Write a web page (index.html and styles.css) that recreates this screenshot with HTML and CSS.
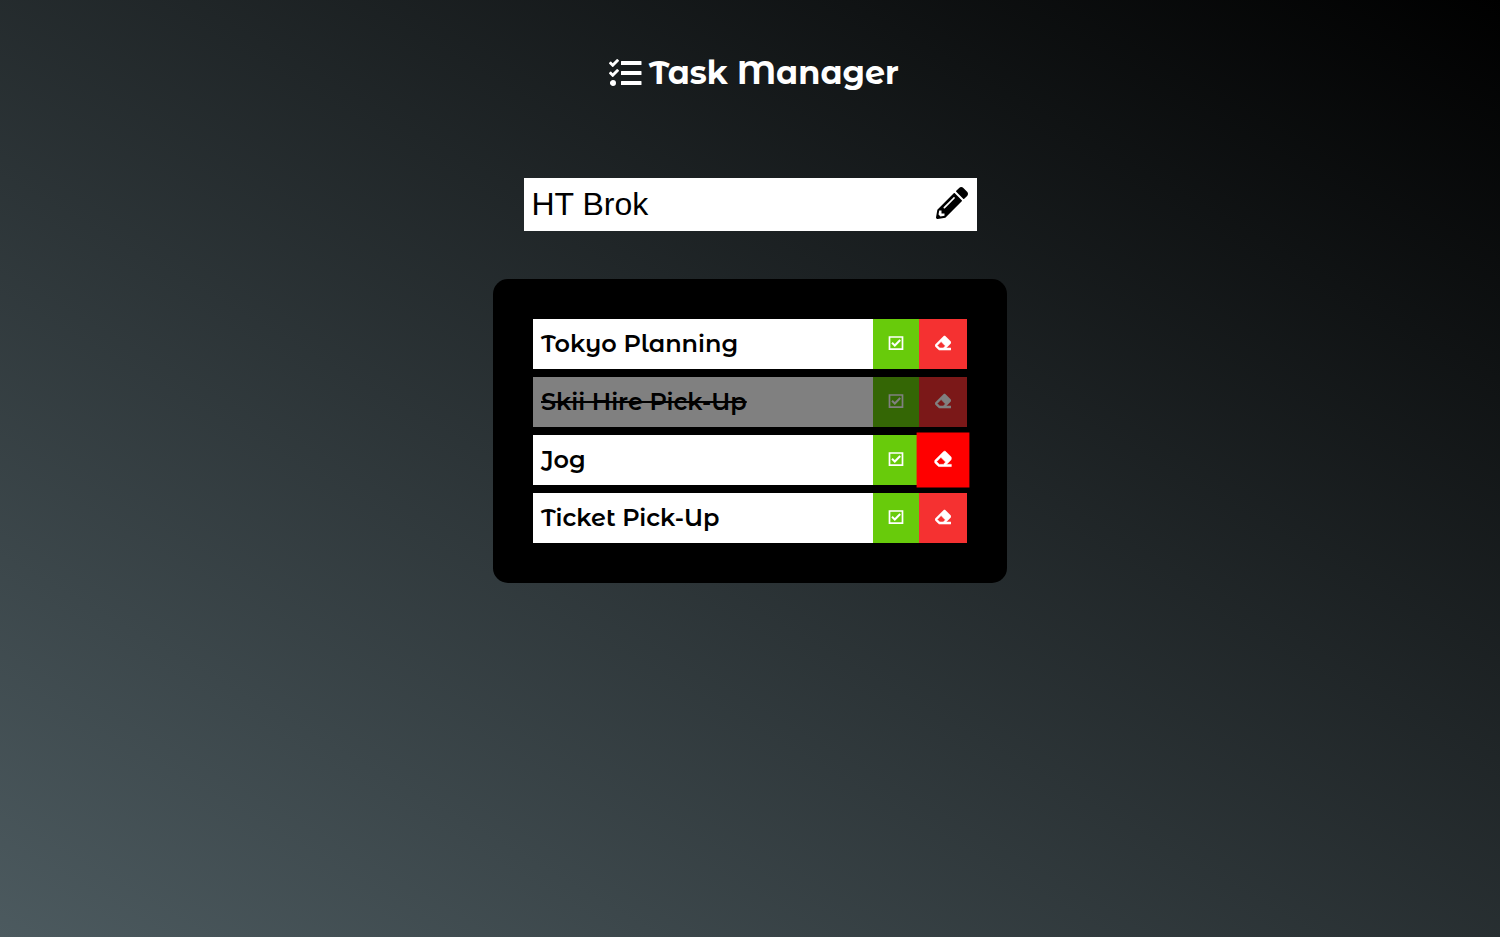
FILE: index.html
```
<!DOCTYPE html>
<html lang="en">
<head>
<meta charset="utf-8">
<title>Task Manager</title>
<link rel="stylesheet" href="styles.css">
</head>
<body>
<svg width="0" height="0" class="sprite" aria-hidden="true">
  <symbol id="check" viewBox="0 0 16 16"><path d="M1.500 2h13v12.200h-13z" fill="none" stroke="currentColor" stroke-width="1.700"/><path d="M4 7.800l2.800 2.700L12.200 5" fill="none" stroke="currentColor" stroke-width="2"/></symbol>
  <symbol id="eraser" viewBox="0 0 512 512"><path fill="currentColor" stroke="currentColor" stroke-width="18" d="M497.941 273.941c18.745-18.745 18.745-49.137 0-67.882l-160-160c-18.745-18.745-49.136-18.746-67.883 0l-256 256c-18.745 18.745-18.745 49.137 0 67.882l96 96A48.004 48.004 0 0 0 144 480h356c6.627 0 12-5.373 12-12v-40c0-6.627-5.373-12-12-12H355.883l142.058-142.059zm-302.627-62.627l137.373 137.373L265.373 416H150.628l-80-80 124.686-124.686z"/></symbol>
</svg>
<header>
  <h1>
    <svg class="list-icon" viewBox="0 0 512 512"><path fill="currentColor" d="M139.61 35.5a12 12 0 0 0-17 0L58.93 98.81l-22.7-22.12a12 12 0 0 0-17 0L3.53 92.41a12 12 0 0 0 0 17l47.59 47.4a12.78 12.78 0 0 0 17.61 0l15.59-15.62L156.52 69a12.09 12.09 0 0 0 .09-17zm0 159.19a12 12 0 0 0-17 0l-63.68 63.72-22.7-22.1a12 12 0 0 0-17 0L3.53 252a12 12 0 0 0 0 17L51 316.5a12.77 12.77 0 0 0 17.6 0l15.7-15.69 72.2-72.22a12 12 0 0 0 .09-16.9zM64 368c-26.49 0-48.59 21.5-48.59 48S37.53 464 64 464a48 48 0 0 0 0-96zm432 16H200a8 8 0 0 0-8 8v48a8 8 0 0 0 8 8h312a8 8 0 0 0 8-8v-48a8 8 0 0 0-8-8zm0-320H200a8 8 0 0 0-8 8v48a8 8 0 0 0 8 8h312a8 8 0 0 0 8-8V72a8 8 0 0 0-8-8zm0 160H200a8 8 0 0 0-8 8v48a8 8 0 0 0 8 8h312a8 8 0 0 0 8-8v-48a8 8 0 0 0-8-8z"/></svg>
    <span>Task Manager</span>
  </h1>
</header>
<form class="entry">
  <span class="value">HT Brok</span>
  <svg class="pencil" viewBox="0 0 512 512"><path d="M497.900 142.100l-46.100 46.100c-4.700 4.700-12.300 4.700-17 0l-111-111c-4.700-4.700-4.700-12.300 0-17l46.100-46.100c18.700-18.700 49.100-18.700 67.900 0l60.100 60.100c18.800 18.700 18.800 49.100 0 67.900zM284.200 99.800L21.600 362.400.4 483.900c-2.900 16.400 11.400 30.600 27.800 27.800l121.500-21.300 262.600-262.600c4.700-4.700 4.700-12.300 0-17l-111-111c-4.800-4.700-12.400-4.700-17.100 0zM124.100 339.900c-5.500-5.500-5.500-14.300 0-19.800l154-154c5.500-5.500 14.300-5.500 19.800 0s5.500 14.300 0 19.800l-154 154c-5.500 5.500-14.300 5.500-19.800 0zM88 424h48v36.300l-64.500 11.300-31.100-31.100L51.700 376H88v48z"/></svg>
</form>
<ul class="tasks">
  <li class="task"><span class="name">Tokyo Planning</span><button class="done"><svg><use href="#check"/></svg></button><button class="remove"><svg><use href="#eraser"/></svg></button></li>
  <li class="task completed"><span class="name">Skii Hire Pick-Up</span><button class="done"><svg><use href="#check"/></svg></button><button class="remove"><svg><use href="#eraser"/></svg></button></li>
  <li class="task"><span class="name">Jog</span><button class="done"><svg><use href="#check"/></svg></button><button class="remove hovered"><svg><use href="#eraser"/></svg></button></li>
  <li class="task"><span class="name">Ticket Pick-Up</span><button class="done"><svg><use href="#check"/></svg></button><button class="remove"><svg><use href="#eraser"/></svg></button></li>
</ul>
</body>
</html>
```
FILE: styles.css
```
* { box-sizing: border-box; margin: 0; padding: 0; }
body {
  min-height: 100vh;
  display: flex;
  flex-direction: column;
  align-items: center;
  overflow: hidden;
  font-family: "Montserrat Alternates", Montserrat, Lato, sans-serif;
  background: linear-gradient(210deg, #000000, #4c5a5f);
}
.sprite { position: absolute; }
header { padding: 38px 0 0 8px; height: 178px; }
h1 {
  display: flex;
  align-items: center;
  gap: 8px;
  height: 68px;
  font-size: 32px;
  font-weight: 700;
  color: #fff;
}
.list-icon { width: 32px; height: 32px; margin-top: 1px; overflow: visible; }
.entry {
  width: 453px;
  height: 53px;
  padding: 0 8px;
  display: flex;
  align-items: center;
  justify-content: space-between;
  background: #fff;
}
.value { font: 32px "Liberation Sans", Arial, sans-serif; color: #000; }
.pencil { width: 32px; height: 32px; margin: 0 0.5px 4px 0; }
.tasks {
  width: 514px;
  margin-top: 48px;
  padding: 40px;
  display: flex;
  flex-direction: column;
  gap: 8px;
  list-style: none;
  background: #000;
  border-radius: 15px;
}
.task { display: flex; height: 50px; background: #fff; }
.completed { opacity: .5; }
.name {
  flex: 1;
  padding-left: 8px;
  font-size: 24px;
  font-weight: 600;
  line-height: 50px;
  color: #000;
}
.completed .name { text-decoration: line-through; }
button { border: 0; display: grid; place-items: center; color: #fff; }
button svg { display: block; width: 16px; height: 16px; margin-bottom: 2px; }
.done { width: 46px; background: #68cb0b; }
.remove { width: 48px; background: #f53131; }
.hovered { background: #f00; transform: scale(1.1); }
```
